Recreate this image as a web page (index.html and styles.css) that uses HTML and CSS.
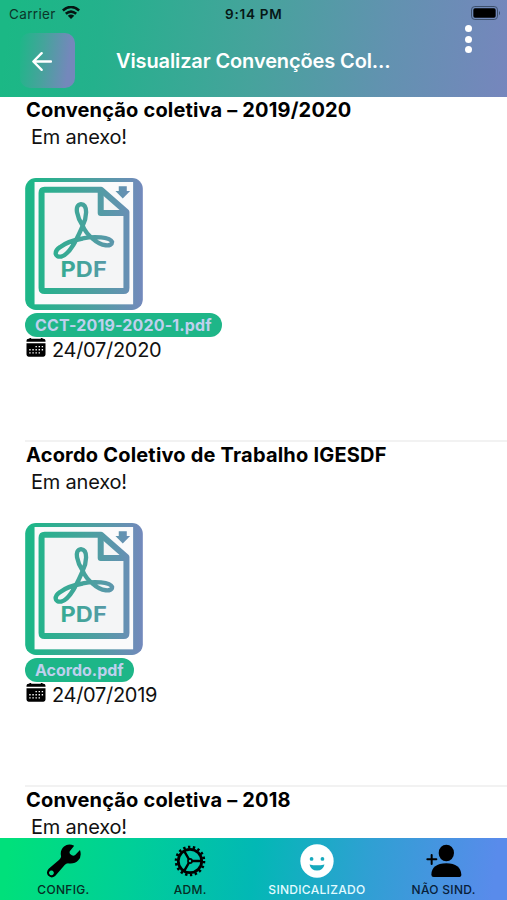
FILE: index.html
```html
<!DOCTYPE html>
<html lang="pt-BR">
<head>
<meta charset="utf-8">
<meta name="viewport" content="width=device-width, initial-scale=1">
<title>Visualizar Convenções Coletivas</title>
<link rel="stylesheet" href="styles.css">
</head>
<body>
<svg class="defs" width="0" height="0" aria-hidden="true">
  <defs>
    <linearGradient id="brand" gradientUnits="userSpaceOnUse" x1="31" y1="0" x2="383" y2="0">
      <stop offset="0.05" stop-color="#1eb688"/>
      <stop offset="0.5" stop-color="#46a39c"/>
      <stop offset="1" stop-color="#7389bc"/>
    </linearGradient>
    <symbol id="pdf" viewBox="31 22 352 395">
      <rect x="31" y="22" width="352" height="395" rx="32" fill="url(#brand)"/>
      <rect x="59" y="34" width="295" height="366" fill="#fafafb"/>
      <path d="M80 56H257L334 124V360H80Z" fill="#f4f5f6"/>
      <path d="M258 57H89Q80 57 80 66V351Q80 360 89 360H326Q334 360 334 351V124Z" fill="none" stroke="url(#brand)" stroke-width="18" stroke-linejoin="round"/>
      <path d="M257 57V127H334" fill="none" stroke="url(#brand)" stroke-width="18" stroke-linejoin="round"/>
      <path d="M311 47h24v14h10l-22 22l-22-22h10Z" fill="url(#brand)"/>
      <path d="M203 165C188 143 175 102 198 100C221 102 214 143 203 165C192 190 168 250 139 257C118 260 117 241 135 229C156 213 179 207 203 203C238 195 285 199 291 213C292 229 258 227 235 205C219 193 209 180 203 165Z" fill="none" stroke="url(#brand)" stroke-width="13" stroke-linejoin="round"/>
      <text x="137" y="318" class="pdf-label" textLength="138" lengthAdjust="spacingAndGlyphs" fill="url(#brand)">PDF</text>
    </symbol>
    <symbol id="calendar" viewBox="0 0 57 55">
      <path d="M7 2h43q6 0 6 6v3H1V8q0-6 6-6Z M1 15h55v33q0 6-6 6H7q-6 0-6-6Z"/>
      <path d="M12 0v7M45 0v7" stroke="#000" stroke-width="5"/>
      <path d="M27 25h22M9 34h40M9 43h31" stroke="#fff" stroke-width="4" stroke-dasharray="4 5"/>
    </symbol>
  </defs>
</svg>
<div class="app">
  <header class="top">
    <div class="status">
      <span class="carrier">Carrier</span>
      <svg class="wifi" viewBox="0 0 54 40"><g fill="none" stroke="#051512" stroke-width="8"><path d="M2 14Q27-8 52 14"/><path d="M11 24Q27 10 43 24"/></g><path d="M17 30Q27 22 37 30L27 40Z" fill="#051512"/></svg>
      <span class="clock">9:14 PM</span>
      <svg class="battery" viewBox="0 0 90 42"><rect x="1.5" y="1.5" width="78" height="39" rx="10" fill="none" stroke="#3d506d" stroke-width="3"/><rect x="7" y="7" width="67" height="28" rx="5"/><path d="M84 14q6 7 0 14Z" fill="#3d506d"/></svg>
    </div>
    <div class="bar">
      <button class="back" aria-label="Voltar"><svg viewBox="0 0 60 56"><path d="M29 3L4 28L29 53M5 28H57" fill="none" stroke="#fff" stroke-width="7" stroke-linecap="round" stroke-linejoin="round"/></svg></button>
      <h1>Visualizar Convenções Col...</h1>
      <div class="more"><i></i><i></i><i></i></div>
    </div>
  </header>
  <main>
    <article class="item">
      <h2>Convenção coletiva – 2019/2020</h2>
      <p class="note">Em anexo!</p>
      <svg class="pdf"><use href="#pdf"/></svg>
      <span class="file">CCT-2019-2020-1.pdf</span>
      <div class="date"><svg><use href="#calendar"/></svg><time>24/07/2020</time></div>
    </article>
    <article class="item">
      <h2 class="wide">Acordo Coletivo de Trabalho IGESDF</h2>
      <p class="note">Em anexo!</p>
      <svg class="pdf"><use href="#pdf"/></svg>
      <span class="file short">Acordo.pdf</span>
      <div class="date"><svg><use href="#calendar"/></svg><time>24/07/2019</time></div>
    </article>
    <article class="item last">
      <h2>Convenção coletiva – 2018</h2>
      <p class="note">Em anexo!</p>
    </article>
  </main>
  <nav>
    <a class="tab config"><svg viewBox="144 26 100 100"><path fill-rule="evenodd" d="M224 31Q207 23 194 33Q182 44 185 60Q187 66 180 72L149 99Q140 109 147 119Q157 129 168 120L196 88Q201 82 208 83Q226 85 236 74Q247 62 241 44L227 58Q222 62 217 59L213 56Q209 53 211 47ZM157 104a7 7 0 1 0 .1 0Z"/></svg><span>CONFIG.</span></a>
    <a class="tab adm"><svg viewBox="-50 -50 100 100"><g fill="none" stroke="#000"><circle r="41" stroke-width="8" stroke-dasharray="7 7.31"/><circle r="34.5" stroke-width="8"/><path d="M5 0H33M-2.5 4L-17 29M-2.5-4L-17-29" stroke-width="7"/><circle r="6" stroke-width="5"/></g></svg><span>ADM.</span></a>
    <a class="tab active"><svg viewBox="0 0 100 100"><circle cx="50" cy="50" r="49" fill="#fff"/><g fill="#16a9bd"><circle cx="34" cy="44" r="5.5"/><circle cx="66" cy="44" r="5.5"/><path d="M28 60Q50 65 72 60Q68 78 50 78Q32 78 28 60Z"/></g></svg><span>SINDICALIZADO</span></a>
    <a class="tab nao"><svg viewBox="518 26 108 100"><ellipse cx="579" cy="52" rx="23" ry="25"/><path d="M534 117Q535 84 579 83Q622 84 624 117Q624 124 616 124H541Q534 124 534 117Z"/><path d="M522 71H549M535 58V85" stroke="#000" stroke-width="6" stroke-linecap="round"/></svg><span>NÃO SIND.</span></a>
  </nav>
</div>
</body>
</html>
```
FILE: styles.css
```css
* { box-sizing: border-box; }
body { margin: 0; font-family: Inter, "Liberation Sans", sans-serif; color: #000; }
.defs { display: block; height: 0; }
.app { height: 900px; display: flex; flex-direction: column; overflow: hidden; background: #fff; }
.top { height: 97px; flex: none; background: linear-gradient(97deg, #1bb885 2%, #24b18c 20%, #46a39c 50%, #6292b0 76%, #7686bd 100%); }
.status { height: 27px; display: grid; grid-template-columns: 53px 18px 1fr 30px; align-items: center; padding: 0 6px 0 9px; }
.carrier { font-size: 13.5px; letter-spacing: .35px; color: #0b3529; }
.clock { font-size: 13.5px; font-weight: 600; margin-left: 145px; letter-spacing: .75px; color: #061716; white-space: nowrap; }
.wifi { width: 18px; height: 13px; margin-top: -2px; }
.battery { width: 30px; height: 14px; margin-top: -1px; }
.bar { height: 70px; display: flex; }
.back { width: 55px; height: 55px; margin: 6px 0 0 20px; padding: 1px 0 0 12px; border: 0; border-radius: 10px; background: linear-gradient(97deg, #1fb688 2%, #46a39c 42%, #7488bb 85%); text-align: left; }
.back svg { width: 20px; height: 19px; display: block; }
h1 { margin: 0 0 0 41px; width: 310px; font-size: 20px; line-height: 69px; font-weight: 600; letter-spacing: -.12px; color: #fff; white-space: nowrap; }
.more { display: flex; flex-direction: column; gap: 3.5px; margin: -2px 0 0 39px; }
.more i { width: 7px; height: 7px; border-radius: 50%; background: #fff; }
main { flex: 1; min-height: 0; overflow: hidden; }
.item { height: 345px; margin-left: 25px; border-bottom: 2px solid #f2f2f2; display: flex; flex-direction: column; align-items: flex-start; }
.item.last { height: 51px; border-bottom: 0; }
.item h2 { margin: 0 0 0 1px; font-size: 20px; line-height: 27px; font-weight: 700; letter-spacing: .17px; white-space: nowrap; }
.item h2.wide { letter-spacing: .2px; }
.note { margin: 0 0 27px 6px; font-size: 20px; line-height: 27px; letter-spacing: -.2px; color: #111; }
.last .note { margin: 1px 0 0 6px; line-height: 24px; }
.pdf { width: 118px; height: 132px; display: block; flex: none; }
.pdf-label { font: 700 64px Inter, sans-serif; }
.file { height: 24px; margin-top: 3px; padding: 0 10px; border-radius: 12px; background: #1eb688; color: #bfd0ee; font-size: 16px; line-height: 24px; font-weight: 700; letter-spacing: .15px; white-space: nowrap; }
.file.short { letter-spacing: 0; }
.date { display: flex; height: 27px; }
.date svg { width: 20px; height: 19px; margin: 1px 6px 0 1px; }
time { font-size: 20px; line-height: 27px; letter-spacing: -.3px; color: #111; }
nav { height: 62px; flex: none; display: grid; grid-template-columns: repeat(4, 1fr); background: linear-gradient(97deg, #00e07b 2%, #00cf98 26%, #02b8b5 50%, #2fa0d3 72%, #598beb 97%); }
.tab { display: flex; flex-direction: column; align-items: center; font-size: 12px; font-weight: 500; letter-spacing: .3px; line-height: 16px; color: #062d24; padding-top: 6px; }
.tab svg { width: 34px; height: 34px; margin-bottom: 4px; }
.config svg { transform: translateX(1px); }
.active { color: #e2fbff; }
.nao svg { width: 36px; }
.nao { color: #08203a; }
```
